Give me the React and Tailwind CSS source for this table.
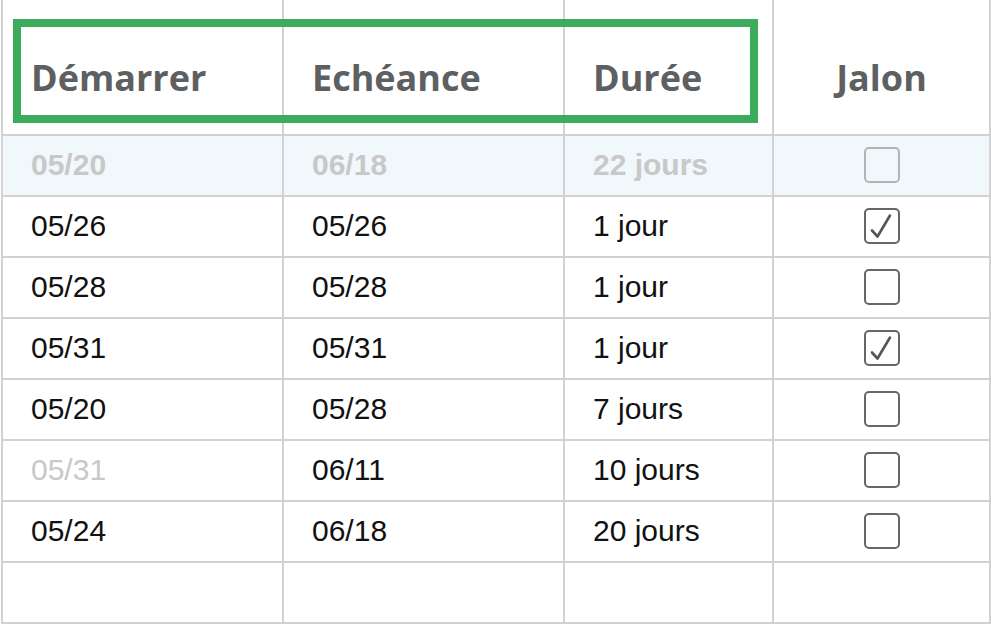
import React from 'react';

const rows = [
    { start: '05/20', end: '06/18', duration: '22 jours', milestone: false, summary: true },
    { start: '05/26', end: '05/26', duration: '1 jour', milestone: true },
    { start: '05/28', end: '05/28', duration: '1 jour', milestone: false },
    { start: '05/31', end: '05/31', duration: '1 jour', milestone: true },
    { start: '05/20', end: '05/28', duration: '7 jours', milestone: false },
    { start: '05/31', end: '06/11', duration: '10 jours', milestone: false, startMuted: true },
    { start: '05/24', end: '06/18', duration: '20 jours', milestone: false },
    { start: '', end: '', duration: '', milestone: null },
];

function Checkbox({ checked, muted }) {
    return (
        <div
            className={`w-[36px] h-[36px] rounded-[5px] border-2 flex items-center justify-center ${
                muted ? 'border-[#b4b4b4]' : 'border-[#666666]'
            }`}
        >
            {checked && (
                <svg width="32" height="32" viewBox="0 0 32 32" fill="none">
                    <path
                        d="M6 20.5 L11.5 26.5 L24 5.5"
                        stroke="#555555"
                        strokeWidth="2.6"
                        strokeLinecap="round"
                        strokeLinejoin="round"
                    />
                </svg>
            )}
        </div>
    );
}

function App() {
    const headerCell = 'h-[136px] border-b-2 border-r-2 border-[#d2d2d2] pt-[53px] px-[28px]';
    const cell = 'h-[61px] border-b-2 border-r-2 border-[#d2d2d2] flex items-center px-[28px] pb-[2px]';

    return (
        <div className="relative w-[991px] h-[624px] overflow-hidden bg-white">
            <div className="ml-[1px] grid grid-cols-[281px_281px_209px_1fr] border-l-2 border-[#d2d2d2]">
                {/* en-tête */}
                <div className={headerCell}>
                    <span className="font-['Open_Sans',sans-serif] font-bold text-[36px] leading-[49px] text-[#5e5f61]">Démarrer</span>
                </div>
                <div className={headerCell}>
                    <span className="font-['Open_Sans',sans-serif] font-bold text-[36px] leading-[49px] text-[#5e5f61]">Echéance</span>
                </div>
                <div className={headerCell}>
                    <span className="font-['Open_Sans',sans-serif] font-bold text-[36px] leading-[49px] text-[#5e5f61]">Durée</span>
                </div>
                <div className={`${headerCell} text-center`}>
                    <span className="font-['Open_Sans',sans-serif] font-bold text-[36px] leading-[49px] text-[#5e5f61]">Jalon</span>
                </div>

                {/* lignes */}
                {rows.map((row, i) => {
                    const bg = row.summary ? 'bg-[#f0f8fc]' : 'bg-white';
                    const text = row.summary
                        ? 'font-bold text-[#c8c8c8]'
                        : 'text-[#111111]';
                    const font = "font-['Liberation_Sans',Arial,sans-serif] text-[30px]";
                    return (
                        <React.Fragment key={i}>
                            <div className={`${cell} ${bg} ${font} ${row.startMuted ? 'text-[#c8c8c8]' : text}`}>{row.start}</div>
                            <div className={`${cell} ${bg} ${font} ${text}`}>{row.end}</div>
                            <div className={`${cell} ${bg} ${font} ${text}`}>{row.duration}</div>
                            <div className={`${cell} ${bg} justify-center`}>
                                {row.milestone !== null && (
                                    <Checkbox checked={row.milestone} muted={row.summary} />
                                )}
                            </div>
                        </React.Fragment>
                    );
                })}
            </div>

            {/* cadre de mise en évidence */}
            <div className="absolute left-[13px] top-[19px] w-[745px] h-[104px] border-8 border-[#3cab5b] pointer-events-none" />
        </div>
    );
}

export default App;
